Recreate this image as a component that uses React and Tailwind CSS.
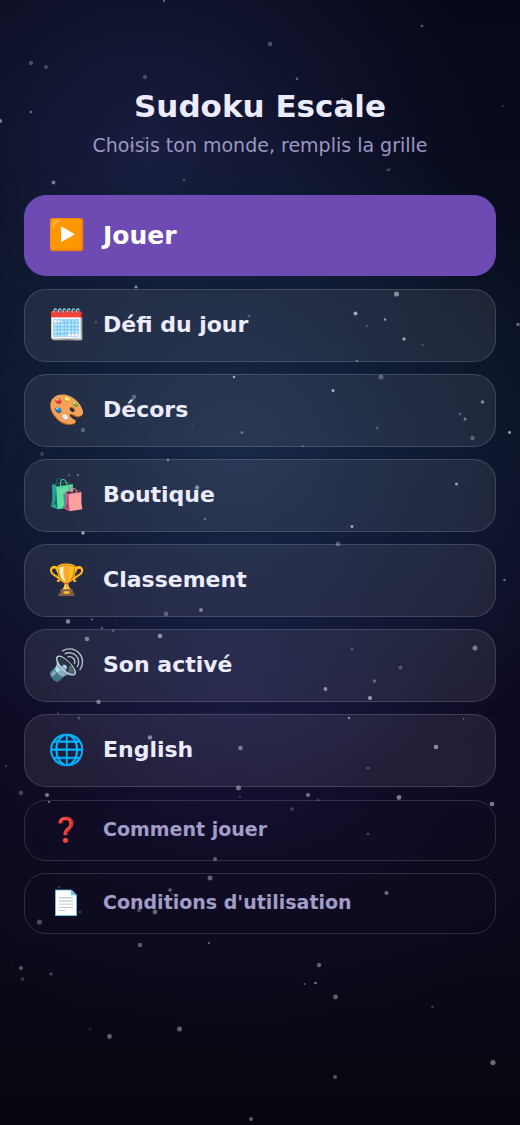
import React from 'react';
import { clsx } from 'clsx';

// x, y, radius, opacity
const STARS = [
  [164, 1, 1, 0.5], [270, 44, 2.2, 0.3], [422, 26, 1.3, 0.35], [31, 63, 2.2, 0.28], [46, 67, 2, 0.25],
  [145, 77, 2.2, 0.25], [297, 79, 1.4, 0.35], [31, 112, 1.3, 0.4], [0, 121, 2, 0.55], [342, 99, 1.2, 0.4],
  [188, 104, 2, 0.3], [503, 106, 1.1, 0.2], [132, 146, 2, 0.3], [144, 138, 1, 0.3], [403, 144, 1, 0.3],
  [388, 170, 1.6, 0.25], [390, 169, 1, 0.2], [184, 180, 1.2, 0.25], [53.5, 182.5, 2, 0.45],
  [136, 287, 1.5, 0.6], [96, 322, 1.2, 0.25], [249, 316, 1.5, 0.25], [396.5, 294, 2.6, 0.5], [355.5, 313.5, 2, 0.65],
  [385, 319.5, 1.2, 0.6], [367, 326, 1, 0.3], [404, 339, 1.8, 0.6], [422.5, 345, 1, 0.3], [518, 324.5, 1.8, 0.4],
  [357, 361, 1, 0.5], [234, 377, 1.3, 0.7], [134, 397, 2.3, 0.3], [83, 430, 2.2, 0.3], [193, 426, 0.8, 0.25],
  [242, 432.5, 1.5, 0.35], [42, 454, 1.9, 0.2], [333, 390.5, 1.5, 0.7], [381, 377, 2.5, 0.3],
  [482.5, 402, 1.8, 0.5], [460, 414, 1.5, 0.25], [465, 419, 1.5, 0.45], [472.5, 438, 2.2, 0.3],
  [377, 428, 1.4, 0.25], [509.5, 432.5, 1.4, 0.7], [303, 446, 1, 0.3], [168, 460, 1.2, 0.5], [197, 487.5, 2.2, 0.5],
  [69, 475.5, 0.9, 0.35], [78, 475, 1.2, 0.35], [205, 519, 1, 0.5], [78, 524, 0.7, 0.2], [83, 533, 1.7, 0.65],
  [456.5, 484, 1.6, 0.6], [352, 526.5, 1.4, 0.7], [338, 544, 2.4, 0.3], [504.5, 580, 1.3, 0.4],
  [201, 610, 1.9, 0.5], [166, 614, 2.4, 0.3], [68, 621.5, 2.2, 0.55], [92, 619.5, 1.1, 0.4], [116, 621, 0.7, 0.2],
  [102, 628, 1.3, 0.3], [113, 630.5, 1.5, 0.25], [87, 639, 2.3, 0.5], [160, 636, 2.3, 0.55],
  [98.5, 702, 2.2, 0.45], [58, 713, 0.8, 0.4], [79, 718, 1.5, 0.25], [150, 737.5, 2.3, 0.5], [240.5, 748, 2.3, 0.45],
  [6, 766, 0.9, 0.35], [21, 793, 2.3, 0.25], [47, 795, 2.1, 0.5], [49, 802, 0.9, 0.6], [238.5, 788, 2.5, 0.45],
  [240, 797, 1, 0.25], [352, 649, 1.2, 0.3], [475, 648, 2.5, 0.45], [400.5, 667.5, 2, 0.25], [374.5, 681, 1.7, 0.35],
  [325.5, 689, 1.9, 0.55], [370, 698, 2.1, 0.6], [349, 718, 1.2, 0.5], [463.5, 719, 0.7, 0.5], [436, 747, 2.3, 0.55],
  [368, 768, 1.6, 0.25], [299, 777, 0.6, 0.2], [308, 795, 2.1, 0.45], [318, 800, 1.4, 0.2], [399, 797.5, 2.4, 0.5],
  [492, 804, 2.3, 0.5], [292, 809, 1.8, 0.25], [368, 834, 1.4, 0.25], [215, 859, 2.1, 0.35],
  [210, 878, 2.5, 0.4], [59, 887, 1.3, 0.2], [170, 890, 1.8, 0.4], [172, 894, 0.8, 0.4], [139, 910, 2.1, 0.3],
  [155, 912, 2.4, 0.4], [80, 912, 1.6, 0.2], [39.5, 922, 2.6, 0.3], [386.5, 893, 2, 0.45],
  [140, 945, 2.3, 0.35], [209, 943, 1, 0.5], [12, 965, 1, 0.1], [21, 968, 2.1, 0.35], [22.5, 979, 2.1, 0.2],
  [51, 974, 1.6, 0.3], [319, 965, 2.2, 0.4], [304.5, 984, 1, 0.4], [315.5, 983, 1.3, 0.5], [335.5, 997, 2.4, 0.4],
  [432.5, 1007, 1.3, 0.25], [90, 1029, 1.3, 0.15], [109.5, 1036.5, 2.4, 0.4], [179.5, 1029, 2.5, 0.4],
  [381, 1064, 1, 0.12], [335, 1077, 2, 0.35], [493, 1062.5, 2.6, 0.45], [251, 1119, 1.9, 0.4],
];

const WORLD_ITEMS = [
  { icon: '🗓️', label: 'Défi du jour' },
  { icon: '🎨', label: 'Décors' },
  { icon: '🛍️', label: 'Boutique' },
  { icon: '🏆', label: 'Classement' },
  { icon: '🔊', label: 'Son activé' },
  { icon: '🌐', label: 'English' },
];

const INFO_ITEMS = [
  { icon: '❓', label: 'Comment jouer' },
  { icon: '📄', label: "Conditions d'utilisation" },
];

const VARIANTS = {
  primary: 'h-[81px] bg-[#6d4bb3] border-[#6d4bb3] text-white text-[25px]',
  normal: 'h-[73px] bg-white/8 border-white/14 text-[#ecebff] text-[22px] pb-0.5',
  ghost: 'h-[61px] bg-transparent border-white/14 text-[#a29cc9] text-[19px] pb-0.5',
};

const MenuButton = ({ icon, label, variant = 'normal' }) => (
  <button
    type="button"
    className={clsx(
      'flex w-full items-center gap-[18px] rounded-[22px] border px-[22px] text-left font-bold',
      VARIANTS[variant]
    )}
  >
    <span
      aria-hidden="true"
      className={clsx(
        'flex w-[38px] shrink-0 justify-center leading-none font-normal',
        variant === 'primary' && 'pb-0.5',
        variant === 'ghost' ? 'text-[24px]' : 'text-[30px]'
      )}
    >
      {icon}
    </span>
    <span>{label}</span>
  </button>
);

const StarField = () => (
  <svg
    aria-hidden="true"
    className="pointer-events-none absolute inset-0 h-full w-full"
    viewBox="0 0 520 1125"
    preserveAspectRatio="xMidYMin slice"
  >
    {STARS.map(([x, y, r, o]) => (
      <circle key={`${x}-${y}`} cx={x} cy={y} r={r} fill="#e6e6f5" opacity={o} />
    ))}
  </svg>
);

export default function App() {
  return (
    <div className="relative isolate min-h-screen overflow-hidden bg-[#06060f] bg-[radial-gradient(ellipse_75%_30%_at_46%_40%,rgba(26,50,82,0.75),rgba(22,42,72,0.5)_45%,transparent),radial-gradient(ellipse_65%_28%_at_28%_13%,rgba(28,32,68,0.85),rgba(22,26,58,0.5)_50%,transparent),radial-gradient(ellipse_80%_32%_at_45%_61%,rgba(30,24,72,0.75),rgba(22,16,50,0.45)_50%,transparent),linear-gradient(to_bottom,#07091a,#090e20_35%,#09081c_65%,#0a0919_80%,#080814_92%,#06060f)] font-['DejaVu_Sans',sans-serif]">
      <StarField />
      <main className="relative px-6 pt-[86px] pb-10">
        <header className="mb-9 text-center">
          <h1 className="text-[31px] leading-10 font-bold text-[#ecebff]">Sudoku Escale</h1>
          <p className="mt-[5px] text-[19px] leading-7 text-[#9b97c2]">Choisis ton monde, remplis la grille</p>
        </header>

        <nav aria-label="Menu principal" className="flex flex-col gap-[13px]">
          <MenuButton icon="▶️" label="Jouer" variant="primary" />
          <div className="flex flex-col gap-3">
            {WORLD_ITEMS.map((item) => (
              <MenuButton key={item.label} {...item} />
            ))}
          </div>
          <div className="flex flex-col gap-3">
            {INFO_ITEMS.map((item) => (
              <MenuButton key={item.label} {...item} variant="ghost" />
            ))}
          </div>
        </nav>
      </main>
    </div>
  );
}
